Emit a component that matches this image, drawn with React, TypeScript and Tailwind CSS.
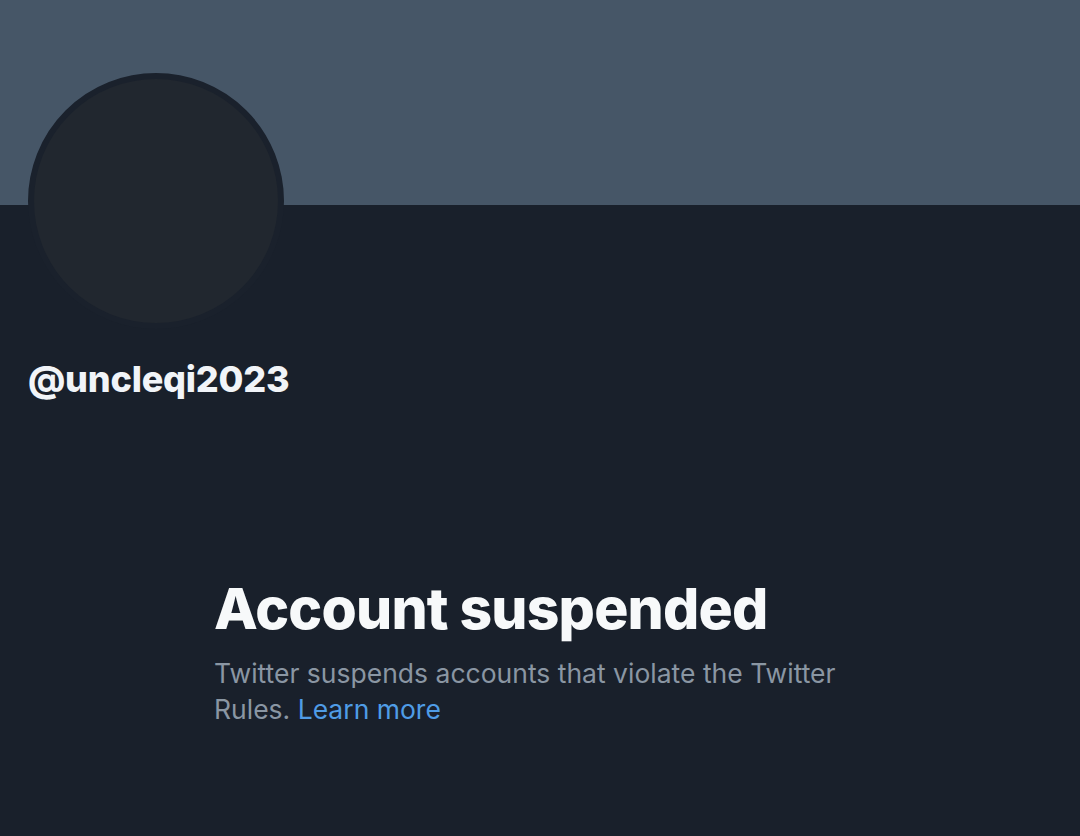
export default function App() {
  return (
    <div className="w-[1080px] h-[836px] overflow-hidden bg-[#19202b] font-['Inter',sans-serif]">
      {/* Banner */}
      <div className="h-[205px] bg-[#465667]" />

      {/* Profile header */}
      <div className="px-[28px]">
        <div className="-mt-[132px] w-[256px] h-[256px] rounded-full border-[6px] border-[#1a212c] bg-[#21272f]" />
        <div className="mt-[30px] text-[36px] leading-[40px] font-extrabold text-[#f1f4f8] tracking-[-0.2px]">
          @uncleqi2023
        </div>
      </div>

      {/* Suspended notice */}
      <div className="mt-[178px] pl-[214px] max-w-[860px]">
        <h1 className="text-[57px] leading-[64px] font-extrabold text-[#f7f9fa] tracking-[-0.8px]">
          Account suspended
        </h1>
        <p className="mt-[14px] text-[26.5px] leading-[36px] text-[#8a96a3] w-[640px]">
          Twitter suspends accounts that violate the Twitter Rules.{' '}
          <span className="text-[#4f9ce6]">Learn more</span>
        </p>
      </div>
    </div>
  )
}
